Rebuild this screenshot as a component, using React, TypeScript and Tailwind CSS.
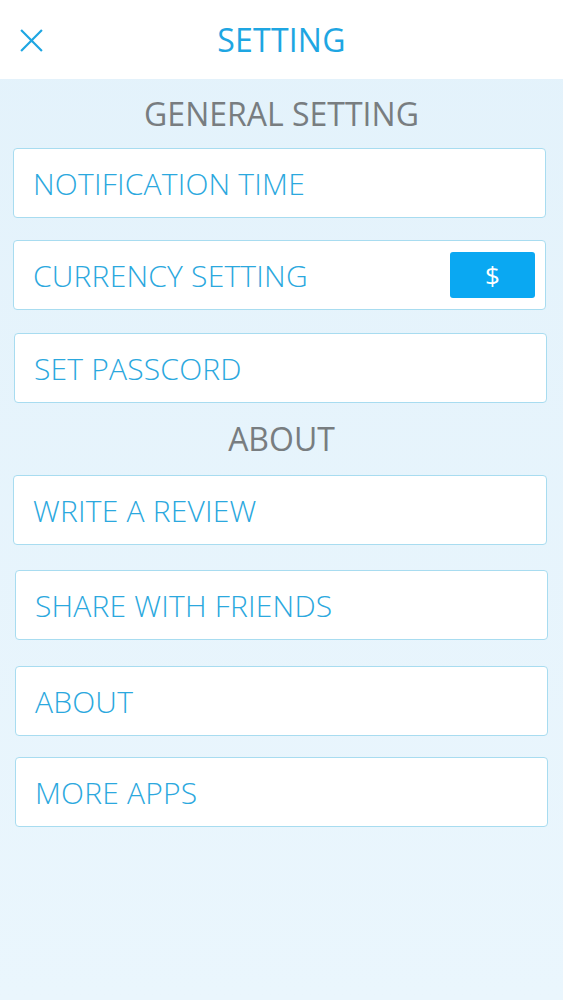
import React from 'react';

const Card = ({ label, className = '', children }: { label: string; className?: string; children?: React.ReactNode }) => (
  <div
    className={`flex h-[70px] items-center justify-between rounded-[4px] border border-[#a8dcf0] bg-white pl-[19px] pr-[10px] ${className}`}
  >
    <span className="text-[30px] font-light tracking-[0.2px] text-[#2ba8de]">{label}</span>
    {children}
  </div>
);

export default function App() {
  return (
    <div
      className="flex min-h-[1000px] w-[563px] flex-col bg-[linear-gradient(180deg,#e3f2fb_0%,#eaf6fd_100%)]"
      style={{ fontFamily: '"Open Sans", "Noto Sans", sans-serif' }}
    >
      {/* header */}
      <div className="relative flex h-[79px] items-center justify-center bg-white">
        <button className="absolute left-[19px] top-[28px] h-[25px] w-[25px]">
          <svg viewBox="0 0 24 24" className="h-[25px] w-[25px]" fill="none" stroke="#1ea6e2" strokeWidth="2.1" strokeLinecap="butt">
            <path d="M2 2L22 22M22 2L2 22" />
          </svg>
        </button>
        <h1 className="text-[32px] font-normal tracking-[0.2px] text-[#1ea6e2]">SETTING</h1>
      </div>

      <div className="flex flex-col pl-[13px] pr-[17px]">
        <h2 className="flex h-[69px] items-center justify-center pl-[4px] text-[32px] font-normal text-[#787d80]">
          GENERAL SETTING
        </h2>
        <Card label="NOTIFICATION TIME" />
        <Card label="CURRENCY SETTING" className="mt-[22px]">
          <div className="flex h-[46px] w-[85px] items-center justify-center rounded-[3px] bg-[#0aa8f2] text-[26px] text-white">
            $
          </div>
        </Card>
        <Card label="SET PASSCORD" className="mt-[23px] ml-[1px] -mr-[1px]" />
        <h2 className="flex h-[72px] items-center justify-center pl-[4px] text-[32px] font-normal text-[#787d80]">
          ABOUT
        </h2>
        <Card label="WRITE A REVIEW" className="-mr-[1px]" />
        <Card label="SHARE WITH FRIENDS" className="mt-[25px] ml-[2px] -mr-[2px]" />
        <Card label="ABOUT" className="mt-[26px] ml-[2px] -mr-[2px]" />
        <Card label="MORE APPS" className="mt-[21px] ml-[2px] -mr-[2px]" />
      </div>
    </div>
  );
}
